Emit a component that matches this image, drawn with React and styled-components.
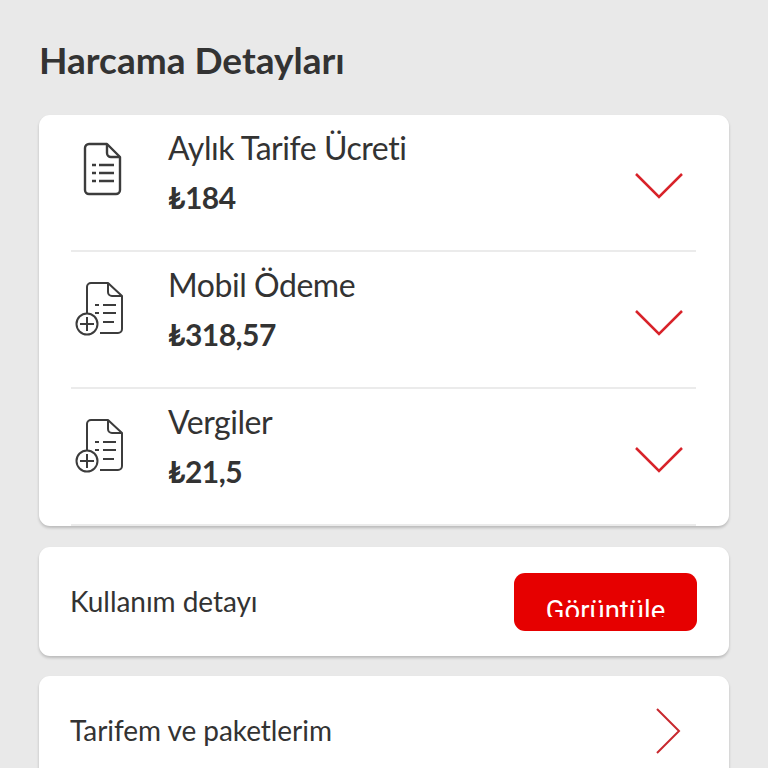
import React from "react";
import styled, { createGlobalStyle } from "styled-components";

const GlobalStyle = createGlobalStyle`
	html, body {
		margin: 0;
		padding: 0;
		background: #e9e9e9;
	}
	body {
		font-family: "Lato", "Noto Sans", sans-serif;
		color: #333333;
	}
`;

const charges = [
	{ title: "Aylık Tarife Ücreti", amount: "₺184", plus: false },
	{ title: "Mobil Ödeme", amount: "₺318,57", plus: true },
	{ title: "Vergiler", amount: "₺21,5", plus: true },
];

const DocIcon = () => (
	<svg width="40" height="54" viewBox="0 0 40 54" fill="none" stroke="#3c3c3c" strokeWidth="2.4">
		<path d="M7 2h18l13 13v33a4 4 0 0 1-4 4H7a4 4 0 0 1-4-4V6a4 4 0 0 1 4-4z" strokeLinejoin="round" />
		<path d="M25 2v9a4 4 0 0 0 4 4h9" strokeLinejoin="round" />
		<path d="M10 23h4M17 23h15M10 31h4M17 31h15M10 39h4M17 39h15" />
	</svg>
);

const DocPlusIcon = () => (
	<svg width="50" height="58" viewBox="0 0 50 58" fill="none" stroke="#3c3c3c" strokeWidth="2">
		<path d="M12 33V7a4 4 0 0 1 4-4h17l14 13v33a4 4 0 0 1-4 4H25" strokeLinejoin="round" />
		<path d="M33 3v9a4 4 0 0 0 4 4h10" strokeLinejoin="round" />
		<path d="M20 25h4M28 25h13M20 33h4M28 33h13M28 42h11" />
		<circle cx="12" cy="44" r="10.5" />
		<path d="M12 37v14M5 44h14" />
	</svg>
);

const ChevronDown = () => (
	<svg width="48" height="28" viewBox="0 0 48 28" fill="none" stroke="#d8232a" strokeWidth="2.5">
		<path d="M1 2l23 23L47 2" />
	</svg>
);

const ChevronRight = () => (
	<svg width="26" height="46" viewBox="0 0 26 46" fill="none" stroke="#c8282e" strokeWidth="2">
		<path d="M2 1l22 22L2 45" />
	</svg>
);

export default function App() {
	return (
		<Page>
			<GlobalStyle />
			<Heading>Harcama Detayları</Heading>
			<Card>
				{charges.map((item) => (
					<ChargeRow key={item.title}>
						<IconSlot $plus={item.plus}>{item.plus ? <DocPlusIcon /> : <DocIcon />}</IconSlot>
						<ChargeText>
							<ChargeTitle>{item.title}</ChargeTitle>
							<ChargeAmount>{item.amount}</ChargeAmount>
						</ChargeText>
						<ChevronSlot>
							<ChevronDown />
						</ChevronSlot>
					</ChargeRow>
				))}
			</Card>
			<ActionCard>
				<ActionLabel>Kullanım detayı</ActionLabel>
				<ViewButton>
					<ViewLabel>Görüntüle</ViewLabel>
				</ViewButton>
			</ActionCard>
			<LinkCard>
				<ActionLabel>Tarifem ve paketlerim</ActionLabel>
				<ChevronRight />
			</LinkCard>
		</Page>
	);
}

const Page = styled.div`
	height: 768px;
	overflow: hidden;
	padding: 39px 39px 0;
	box-sizing: border-box;
	display: flex;
	flex-direction: column;
`;

const Heading = styled.h1`
	margin: 0 0 34px;
	font-size: 37px;
	line-height: 42px;
	font-weight: 700;
	color: #333333;
`;

const Card = styled.div`
	flex: none;
	background: #ffffff;
	border-radius: 11px;
	box-shadow: 0 2px 3px rgba(0, 0, 0, 0.2);
	padding: 0 33px 0 32px;
	margin-bottom: 21px;
`;

const ChargeRow = styled.div`
	height: 137px;
	box-sizing: border-box;
	display: flex;
	border-bottom: 2px solid #ebebeb;
`;

const IconSlot = styled.div`
	width: 97px;
	flex: none;
	padding-top: ${({ $plus }) => ($plus ? "28px" : "27px")};
	padding-left: ${({ $plus }) => ($plus ? "4px" : "11px")};
	box-sizing: border-box;
`;

const ChargeText = styled.div`
	flex: 1;
	padding-top: 11px;
`;

const ChargeTitle = styled.div`
	font-size: 32px;
	line-height: 44px;
	letter-spacing: -0.45px;
	color: #333333;
`;

const ChargeAmount = styled.div`
	margin-top: 8px;
	font-size: 30px;
	line-height: 38px;
	letter-spacing: -0.5px;
	font-weight: 700;
	color: #333333;
`;

const ChevronSlot = styled.div`
	padding-top: 57px;
	margin-right: 13px;
`;

const ActionCard = styled.div`
	flex: none;
	height: 109px;
	box-sizing: border-box;
	background: #ffffff;
	border-radius: 11px;
	box-shadow: 0 2px 3px rgba(0, 0, 0, 0.2);
	padding: 0 32px 0 31px;
	margin-bottom: 20px;
	display: flex;
	align-items: center;
	justify-content: space-between;
`;

const LinkCard = styled(ActionCard)`
	height: 110px;
	padding-right: 48px;
	margin-bottom: 0;
`;

const ActionLabel = styled.div`
	font-size: 28px;
	line-height: 40px;
	letter-spacing: -0.05px;
	margin-top: -2px;
	color: #333333;
`;

const ViewButton = styled.div`
	width: 183px;
	height: 58px;
	background: #e60000;
	border-radius: 11px;
	display: flex;
	justify-content: center;
	margin-top: 1px;
`;

/* the label is cut off at the bottom in the reference too */
const ViewLabel = styled.div`
	height: 44px;
	overflow: hidden;
	font-family: "Roboto", sans-serif;
	font-size: 27.5px;
	line-height: 75px;
	color: #ffffff;
`;
